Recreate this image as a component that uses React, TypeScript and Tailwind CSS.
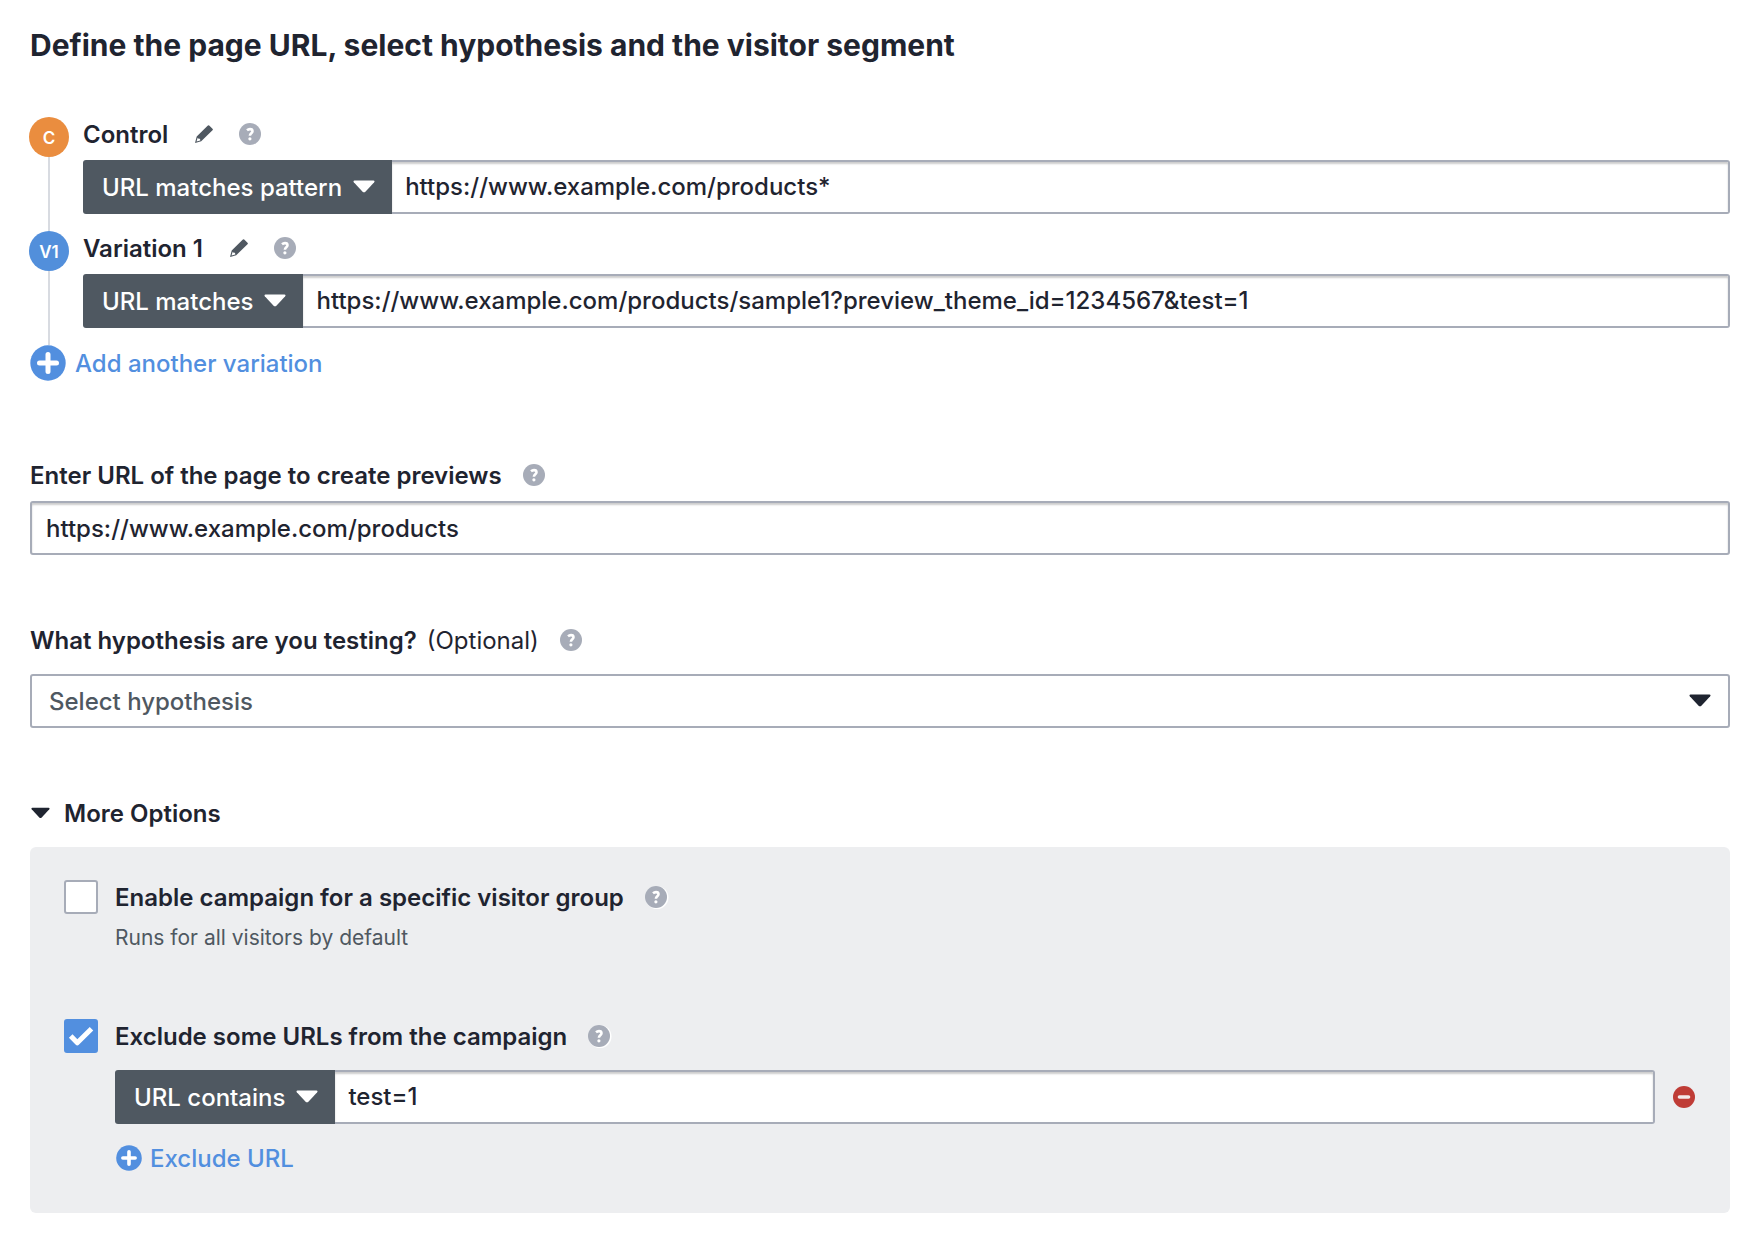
import { useState } from "react";
import type { ReactNode } from "react";

function HelpIcon({ ringed = false }: { ringed?: boolean }) {
  return (
    <button type="button" aria-label="Help" className="size-6 shrink-0">
      <svg viewBox="0 0 24 24" className="size-6 overflow-visible" aria-hidden="true">
        {ringed && <circle cx="13" cy="12.500" r="11.500" fill="#fff" />}
        <circle cx="12" cy="12" r="11" fill="#a7acb8" />
        <path
          d="M9 8.300C9.800 7.600 10.900 7.100 12 7.100c1.600 0 2.500 .8 2.500 2.100 0 2-2.600 2.200-2.600 4.600"
          fill="none"
          stroke="#fff"
          strokeWidth="2.600"
        />
        <circle cx="11.900" cy="16.800" r="1.600" fill="#fff" />
      </svg>
    </button>
  );
}

function PencilButton({ label }: { label: string }) {
  return (
    <button type="button" aria-label={label} className="size-[18px] shrink-0">
      <svg viewBox="0 0 18 18" className="size-[18px]" aria-hidden="true">
        <path
          fill="#4f5861"
          fillRule="evenodd"
          d="M0 18 L1.700 11.600 L12.600 .7 Q13.400 -.1 14.200 .6 L17.500 3.700 Q18.300 4.500 17.500 5.300 L6.200 16.300 Z M2.700 12.700 L1.500 16.600 L5.300 15.400 L5 13.700 L3.600 13.700 Z"
        />
      </svg>
    </button>
  );
}

function Caret({ className }: { className: string }) {
  return (
    <svg viewBox="0 0 22 13" className={className} aria-hidden="true">
      <path
        fill="currentColor"
        d="M1.500 .5h19c1 0 1.300 1 .7 1.700l-8.800 9.500c-.8 .8-2 .8-2.800 0L.8 2.200C.2 1.500 .5 .5 1.500 .5z"
      />
    </svg>
  );
}

function PlusCircle({ className }: { className: string }) {
  return (
    <svg viewBox="0 0 36 36" className={className} aria-hidden="true">
      <circle cx="18" cy="18" r="17.700" fill="#528fdf" />
      <path d="M18 9.500v17M9.500 18h17" stroke="#fff" strokeWidth="5" strokeLinecap="round" />
    </svg>
  );
}

const MATCH_TYPES = ["URL matches", "URL matches pattern", "URL contains"];

function UrlRule({ match, url, label }: { match: string; url: string; label: string }) {
  return (
    <div className="flex h-[54px] min-w-0 flex-1">
      <div className="relative flex shrink-0">
        <select
          aria-label={label + " match type"}
          defaultValue={match}
          className="field-sizing-content appearance-none rounded-l-[3px] bg-[#4f5861] pt-0.5 pr-[50px] pl-[19px] font-medium text-white"
        >
          {MATCH_TYPES.map((m) => (
            <option key={m}>{m}</option>
          ))}
        </select>
        <Caret className="pointer-events-none absolute top-5 right-[17px] h-[13px] w-[22px] text-white" />
      </div>
      <input
        type="text"
        aria-label={label + " URL"}
        defaultValue={url}
        className="min-w-0 flex-1 rounded-r-[3px] border-2 border-l-0 border-[#a7acb8] bg-white px-[13px] font-medium shadow-[inset_0_2px_2px_rgba(0,0,0,0.2)]"
      />
    </div>
  );
}

function Variation(props: { badge: string; color: string; name: string; match: string; url: string }) {
  return (
    <li className="flex gap-3.5">
      <div className="flex w-10 flex-col items-center">
        <span className={"flex size-10 items-center justify-center rounded-full pt-0.5 text-[17px] font-semibold text-white " + props.color}>
          {props.badge}
        </span>
        <span className="w-0.5 flex-1 bg-[#d8dbe1]" />
      </div>
      <div className="min-w-0 flex-1 pb-[17px]">
        <div className="mb-[9px] flex h-[34px] items-center">
          <span className="mr-[27px] pt-0.5 font-semibold">{props.name}</span>
          <PencilButton label={"Rename " + props.name} />
          <span className="ml-[25px] flex">
            <HelpIcon />
          </span>
        </div>
        <UrlRule match={props.match} url={props.url} label={props.name} />
      </div>
    </li>
  );
}

function Option(props: { label: string; defaultChecked: boolean; children: ReactNode }) {
  const [checked, setChecked] = useState(props.defaultChecked);
  return (
    <div>
      <div className="flex h-[34px] items-center">
        <label className="flex items-center gap-[17px] font-semibold">
          <span className="relative flex size-[34px] shrink-0">
            <input
              type="checkbox"
              checked={checked}
              onChange={(e) => setChecked(e.target.checked)}
              className="size-full appearance-none rounded-[3px] border-2 border-[#a7acb8] bg-white checked:border-[#528fdf] checked:bg-[#528fdf]"
            />
            {checked && (
              <svg viewBox="0 0 34 34" className="pointer-events-none absolute inset-0" aria-hidden="true">
                <path
                  d="M6.700 17l6.600 6.800L27.500 9.800"
                  fill="none"
                  stroke="#fff"
                  strokeWidth="5"
                  strokeLinejoin="round"
                />
              </svg>
            )}
          </span>
          <span className="pt-0.5">{props.label}</span>
        </label>
        <span className="ml-5 flex">
          <HelpIcon ringed />
        </span>
      </div>
      <div className="pl-[51px]">{props.children}</div>
    </div>
  );
}

export default function App() {
  return (
    <main className="bg-white pt-[27px] pr-[22px] pb-[21px] pl-[30px] font-['Inter',sans-serif] text-2xl leading-[34px] text-[#1f2430]">
      <h1 className="text-[30px] leading-9 font-bold">
        Define the page URL, select hypothesis and the visitor segment
      </h1>

      <ul className="mt-[54px] -ml-px">
        <Variation
          badge="C"
          color="bg-[#ea8d3f]"
          name="Control"
          match="URL matches pattern"
          url="https://www.example.com/products*"
        />
        <Variation
          badge="V1"
          color="bg-[#528fdb]"
          name="Variation 1"
          match="URL matches"
          url="https://www.example.com/products/sample1?preview_theme_id=1234567&test=1"
        />
      </ul>
      <button type="button" className="flex h-9 items-center gap-[9px] font-medium text-[#528fdf]">
        <PlusCircle className="size-9" />
        <span className="pt-0.5">Add another variation</span>
      </button>

      <section className="mt-[77px]">
        <div className="mb-[9px] flex h-[34px] items-center gap-5">
          <label htmlFor="preview-url" className="pt-0.5 font-semibold">
            Enter URL of the page to create previews
          </label>
          <HelpIcon />
        </div>
        <input
          id="preview-url"
          type="text"
          defaultValue="https://www.example.com/products"
          className="block h-[54px] w-full rounded-[3px] border-2 border-[#a7acb8] bg-white px-3.5 font-medium shadow-[inset_0_2px_2px_rgba(0,0,0,0.2)]"
        />
      </section>

      <section className="mt-[68px]">
        <div className="mb-[17px] flex h-[34px] items-center gap-5">
          <label htmlFor="hypothesis" className="flex gap-2.5 pt-0.5 font-semibold">
            What hypothesis are you testing?
            <span className="font-normal">(Optional)</span>
          </label>
          <HelpIcon />
        </div>
        <div className="relative">
          <select
            id="hypothesis"
            className="block h-[54px] w-full appearance-none rounded-[3px] border-2 border-[#a7acb8] bg-white px-[17px] pt-0.5 font-medium text-[#4f5861]"
          >
            <option>Select hypothesis</option>
          </select>
          <Caret className="pointer-events-none absolute top-5 right-[19px] h-[13px] w-[22px] text-[#1f2430]" />
        </div>
      </section>

      <section className="mt-[68px]">
        <button type="button" aria-expanded="true" className="flex h-[34px] items-center gap-3.5 pl-px font-semibold">
          <Caret className="h-3 w-[19px]" />
          <span className="pt-0.5">More Options</span>
        </button>
        <div className="mt-[17px] rounded-md bg-[#edeef0] px-[34px] pt-[33px] pb-[38px]">
          <Option label="Enable campaign for a specific visitor group" defaultChecked={false}>
            <p className="mt-2 text-[21px] leading-8 text-[#4f5861]">Runs for all visitors by default</p>
          </Option>
          <div className="mt-[65px]">
            <Option label="Exclude some URLs from the campaign" defaultChecked>
              <div className="mt-[17px] flex items-center gap-[17px]">
                <UrlRule match="URL contains" url="test=1" label="Excluded" />
                <button type="button" aria-label="Remove excluded URL" className="size-6">
                  <svg viewBox="0 0 24 24" className="size-6" aria-hidden="true">
                    <circle cx="12" cy="12" r="11" fill="#bf3c36" />
                    <path d="M7.500 12h9" stroke="#f4e9ea" strokeWidth="3.600" strokeLinecap="round" />
                  </svg>
                </button>
              </div>
              <button type="button" className="mt-[17px] flex h-[34px] items-center gap-2 pl-px font-medium text-[#528fdf]">
                <PlusCircle className="size-[26px]" />
                <span className="pt-0.5">Exclude URL</span>
              </button>
            </Option>
          </div>
        </div>
      </section>
    </main>
  );
}
